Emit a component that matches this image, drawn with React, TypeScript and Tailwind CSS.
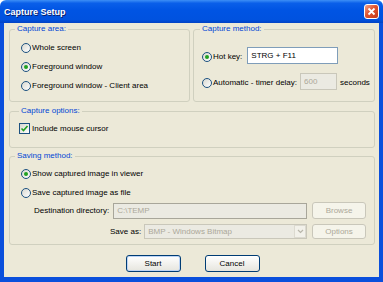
import React from "react";

function Radio({ checked }: { checked?: boolean }) {
  return (
    <span className="flex h-[10px] w-[10px] shrink-0 items-center justify-center rounded-full border border-[#1c5180] bg-linear-to-br from-[#d8d8d0] to-white">
      {checked && <span className="h-[4px] w-[4px] rounded-full bg-[#21a121]" />}
    </span>
  );
}

function Check() {
  return (
    <span className="flex h-[11px] w-[11px] shrink-0 items-center justify-center border border-[#1c5180] bg-linear-to-br from-[#d8d8d0] to-white">
      <svg width="9" height="9" viewBox="0 0 9 9">
        <path d="M1.5 4.5 L3.5 6.5 L7.5 2" fill="none" stroke="#21a121" strokeWidth="1.6" />
      </svg>
    </span>
  );
}

function XPButton({ children, disabled, def }: { children: React.ReactNode; disabled?: boolean; def?: boolean }) {
  if (disabled) {
    return (
      <div className="flex h-full w-[54px] items-center justify-center rounded-[3px] border border-[#c9c7ba] bg-[#f5f4ea] text-[#aca899]">
        {children}
      </div>
    );
  }
  return (
    <div
      className={
        def
          ? "flex h-full w-[55px] items-center justify-center rounded-[3px] border border-[#003c74] bg-linear-to-b from-white to-[#e6e5de] text-black shadow-[inset_0_0_0_1px_#bcd4f6]"
          : "flex h-full w-[55px] items-center justify-center rounded-[3px] border border-[#003c74] bg-linear-to-b from-white to-[#e6e5de] text-black"
      }
    >
      {children}
    </div>
  );
}

export default function App() {
  return (
    <div className="flex h-[282px] w-[383px] flex-col overflow-hidden font-['Liberation_Sans',Arial,sans-serif] text-[8px] leading-[10px] text-black">
      {/* Title bar */}
      <div className="flex h-[23px] shrink-0 items-center rounded-t-[6px] bg-[linear-gradient(180deg,#3d8ff6_0%,#0a5fe9_14%,#0054e3_45%,#0052df_85%,#0242c4_100%)] pl-[4px]">
        <span className="text-[9px] font-bold text-white [text-shadow:1px_1px_0_#0a1f6a]">Capture Setup</span>
        <div className="ml-auto mr-[4px] flex h-[15px] w-[15px] items-center justify-center rounded-[3px] border border-white bg-[linear-gradient(135deg,#f3a48c_0%,#e0542f_45%,#c2391a_100%)]">
          <svg width="9" height="9" viewBox="0 0 9 9">
            <path d="M1.5 1.5 L7.5 7.5 M7.5 1.5 L1.5 7.5" stroke="white" strokeWidth="1.8" />
          </svg>
        </div>
      </div>

      {/* Body */}
      <div className="flex flex-1 flex-col border-x-4 border-b-[5px] border-[#0a4fdc] bg-[#ece9d8] pl-[5px] pr-[4px] pt-[1px]">
        {/* Row 1 */}
        <div className="flex gap-[3px]">
          <fieldset className="m-0 h-[78px] w-[181px] shrink-0 rounded-[3px] border border-[#d0d0bf] p-0">
            <legend className="ml-[5px] px-[2px] text-[#0046d5]">Capture area:</legend>
            <div className="flex flex-col pl-[11px] pt-[4px]">
              <div className="flex h-[19px] items-center gap-[1px]">
                <Radio />
                <span>Whole screen</span>
              </div>
              <div className="flex h-[19px] items-center gap-[1px]">
                <Radio checked />
                <span>Foreground window</span>
              </div>
              <div className="flex h-[19px] items-center gap-[1px]">
                <Radio />
                <span>Foreground window - Client area</span>
              </div>
            </div>
          </fieldset>

          <fieldset className="m-0 h-[78px] flex-1 rounded-[3px] border border-[#d0d0bf] p-0">
            <legend className="ml-[6px] px-[2px] text-[#0046d5]">Capture method:</legend>
            <div className="flex flex-col pl-[8px]">
              <div className="mt-[13px] flex h-[17px] items-center">
                <div className="mt-[2px] flex items-center gap-[1px]">
                  <Radio checked />
                  <span>Hot key:</span>
                </div>
                <input
                  readOnly
                  value="STRG + F11"
                  className="ml-[5px] h-[17px] w-[91px] border border-[#7f9db9] bg-white pl-[3px] text-black outline-none"
                />
              </div>
              <div className="mt-[9px] flex h-[17px] items-center">
                <div className="mt-[2px] flex items-center gap-[1px]">
                  <Radio />
                  <span>Automatic - timer delay:</span>
                </div>
                <input
                  readOnly
                  disabled
                  value="600"
                  className="ml-[3px] h-[17px] w-[37px] border border-[#c9c7ba] bg-[#ebeae2] pl-[3px] text-[#aca899] outline-none"
                />
                <span className="ml-[3px] mt-[2px]">seconds</span>
              </div>
            </div>
          </fieldset>
        </div>

        {/* Capture options */}
        <fieldset className="m-0 mt-[4px] h-[42px] rounded-[3px] border border-[#d0d0bf] p-0">
          <legend className="ml-[9px] px-[2px] text-[#0046d5]">Capture options:</legend>
          <div className="flex items-center gap-[2px] pl-[9px] pt-[7px]">
            <Check />
            <span>Include mouse cursor</span>
          </div>
        </fieldset>

        {/* Saving method */}
        <fieldset className="m-0 mt-[3px] h-[94px] rounded-[3px] border border-[#d0d0bf] p-0">
          <legend className="ml-[5px] px-[2px] text-[#0046d5]">Saving method:</legend>
          <div className="flex flex-col pb-[5px] pr-[8px] pt-[3px]">
            <div className="flex h-[20px] items-center gap-[1px] pl-[11px]">
              <Radio checked />
              <span>Show captured image in viewer</span>
            </div>
            <div className="flex h-[18px] items-center gap-[1px] pl-[11px]">
              <Radio />
              <span>Save captured image as file</span>
            </div>
            <div className="flex h-[17px] items-center pl-[24px]">
              <span>Destination directory:</span>
              <div className="ml-[4px] flex h-[16px] flex-1 items-center border border-[#a8a69a] bg-[#ebeae2] pl-[3px] text-[#aca899]">
                C:\TEMP
              </div>
              <div className="ml-[5px] h-[17px]">
                <XPButton disabled>Browse</XPButton>
              </div>
            </div>
            <div className="mt-[5px] flex h-[15px] items-center pl-[100px]">
              <span>Save as:</span>
              <div className="ml-[3px] flex h-[15px] flex-1 items-center border border-[#c9c7ba] bg-[#ebeae2] pl-[3px] text-[#aca899]">
                <span className="flex-1">BMP - Windows Bitmap</span>
                <div className="flex h-full w-[12px] items-center justify-center border border-[#dcdad0] bg-[#f2f1ea]">
                  <svg width="7" height="5" viewBox="0 0 7 5">
                    <path d="M1 1 L3.5 3.5 L6 1" fill="none" stroke="#b8b6aa" strokeWidth="1.2" />
                  </svg>
                </div>
              </div>
              <div className="ml-[5px] h-[15px]">
                <XPButton disabled>Options</XPButton>
              </div>
            </div>
          </div>
        </fieldset>

        {/* Buttons */}
        <div className="mt-[10px] flex h-[17px] justify-center gap-[24px] pl-[1px]">
          <XPButton def>Start</XPButton>
          <XPButton>Cancel</XPButton>
        </div>
      </div>
    </div>
  );
}
